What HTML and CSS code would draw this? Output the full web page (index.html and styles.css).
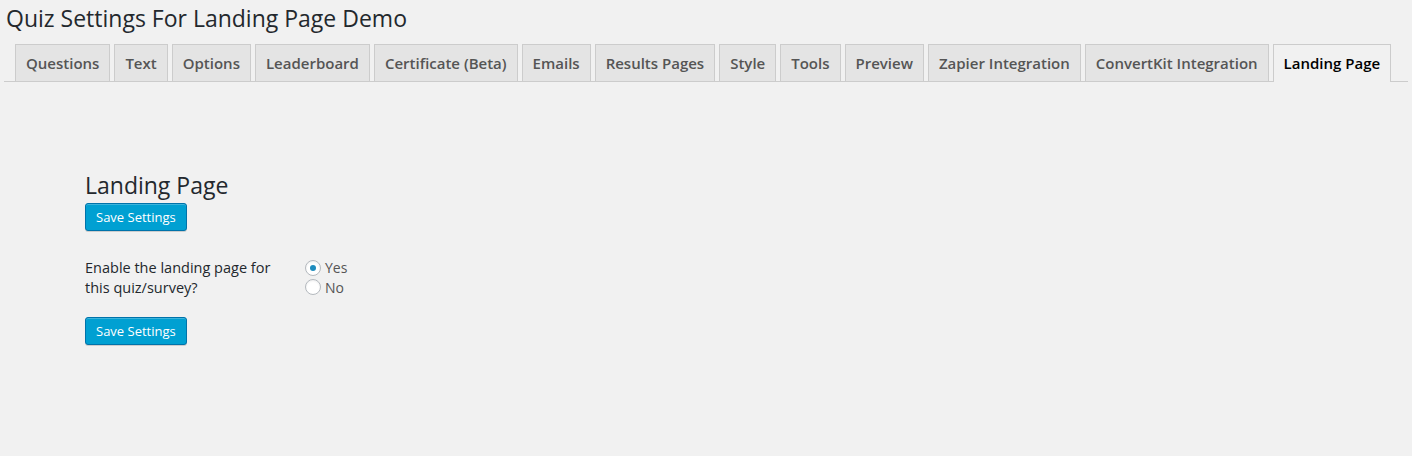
FILE: index.html
```html
<!DOCTYPE html>
<html lang="en">
<head>
<meta charset="utf-8">
<title>Quiz Settings For Landing Page Demo</title>
<link rel="stylesheet" href="styles.css">
</head>
<body>
<div class="wrap">
  <h1 class="page-title">Quiz Settings For Landing Page Demo</h1>
  <nav class="tabs">
    <a class="tab" href="#">Questions</a>
    <a class="tab" href="#">Text</a>
    <a class="tab" href="#">Options</a>
    <a class="tab" href="#">Leaderboard</a>
    <a class="tab" href="#">Certificate (Beta)</a>
    <a class="tab" href="#">Emails</a>
    <a class="tab" href="#">Results Pages</a>
    <a class="tab" href="#">Style</a>
    <a class="tab" href="#">Tools</a>
    <a class="tab" href="#">Preview</a>
    <a class="tab" href="#">Zapier Integration</a>
    <a class="tab" href="#">ConvertKit Integration</a>
    <a class="tab tab-active" href="#">Landing Page</a>
  </nav>
  <section class="panel">
    <h2 class="panel-title">Landing Page</h2>
    <button class="btn-primary" type="button">Save Settings</button>
    <div class="form-row">
      <div class="form-label">Enable the landing page for this quiz/survey?</div>
      <div class="form-field">
        <label class="radio-line"><input class="radio" type="radio" name="landing" checked> Yes</label>
        <label class="radio-line"><input class="radio" type="radio" name="landing"> No</label>
      </div>
    </div>
    <button class="btn-primary" type="button">Save Settings</button>
  </section>
</div>
</body>
</html>
```
FILE: styles.css
```css
html, body {
  margin: 0;
  padding: 0;
  background: #f1f1f1;
}
body {
  font-family: "Open Sans", "Noto Sans", sans-serif;
  font-size: 13px;
  color: #444;
  height: 456px;
}
.wrap {
  padding: 0 4px;
}
.page-title {
  margin: 0;
  padding: 4px 0 0 2px;
  font-size: 23px;
  font-weight: 400;
  line-height: 29px;
  color: #23282d;
}
.tabs {
  display: flex;
  gap: 4px;
  padding: 11px 0 0 11px;
  border-bottom: 1px solid #ccc;
}
.tab {
  display: block;
  padding: 6px 10px;
  font-size: 15px;
  line-height: 24px;
  font-weight: 600;
  color: #555;
  text-decoration: none;
  background: #e4e4e4;
  border: 1px solid #ccc;
  border-bottom: none;
  white-space: nowrap;
}
.tab-active {
  background: #f1f1f1;
  color: #000;
  margin-bottom: -1px;
  padding-bottom: 7px;
}
.panel {
  padding: 88px 0 0 81px;
}
.panel-title {
  margin: 0 0 2px;
  font-size: 23px;
  font-weight: 400;
  line-height: 31px;
  color: #23282d;
}
.btn-primary {
  display: block;
  height: 28px;
  padding: 0 10px 1px;
  font-family: inherit;
  font-size: 13px;
  line-height: 26px;
  color: #fff;
  background: #00a0d2;
  border: 1px solid #0073aa;
  border-radius: 3px;
  box-shadow: inset 0 1px 0 rgba(120, 200, 230, 0.5), 0 1px 0 rgba(0, 0, 0, 0.15);
  cursor: pointer;
}
.form-row {
  display: flex;
  padding: 27px 0 20px;
}
.form-label {
  width: 200px;
  padding-right: 20px;
  font-size: 14.5px;
  font-weight: 400;
  line-height: 19.5px;
  color: #23282d;
}
.form-field {
  display: flex;
  flex-direction: column;
  font-size: 14px;
  line-height: 19.5px;
  color: #555;
}
.radio-line {
  display: flex;
  align-items: center;
  gap: 4px;
}
.radio {
  appearance: none;
  -webkit-appearance: none;
  width: 16px;
  height: 16px;
  margin: 0;
  border: 1px solid #b4b9be;
  border-radius: 50%;
  background: #fff;
  box-shadow: inset 0 1px 2px rgba(0, 0, 0, 0.07);
  display: grid;
  place-items: center;
}
.radio:checked::before {
  content: "";
  width: 6px;
  height: 6px;
  border-radius: 50%;
  background: #1e8cbe;
}
```
